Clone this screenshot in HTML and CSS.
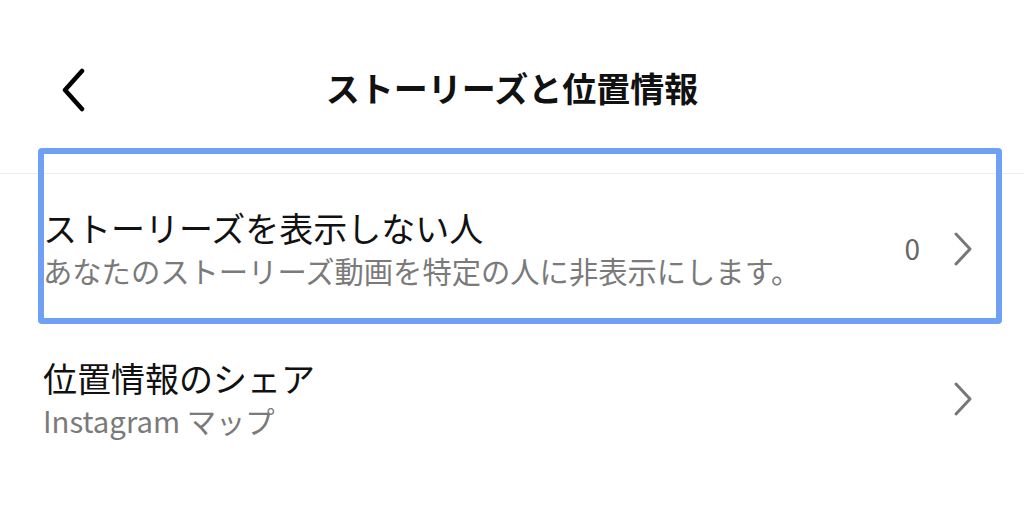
FILE: index.html
```html
<!DOCTYPE html>
<html lang="ja">
<head>
  <meta charset="UTF-8" />
  <meta name="viewport" content="width=device-width, initial-scale=1" />
  <title>ストーリーズと位置情報</title>
  <link rel="stylesheet" href="styles.css">
</head>
<body>

  <!-- Header -->
  <header class="top-bar">
    <button class="back-btn" aria-label="戻る">
      <svg width="30" height="44" viewBox="0 0 30 44" aria-hidden="true">
        <path d="M24 3 L7 22 L24 41" fill="none" stroke="#000" stroke-width="4.5" stroke-linecap="round" stroke-linejoin="round"/>
      </svg>
    </button>
    <h1 class="page-title">ストーリーズと位置情報</h1>
  </header>

  <!-- Settings list -->
  <main class="settings">
    <a href="#" class="setting-row">
      <div class="setting-text">
        <span class="setting-title">ストーリーズを表示しない人</span>
        <span class="setting-sub">あなたのストーリーズ動画を特定の人に非表示にします。</span>
      </div>
      <span class="setting-count">0</span>
      <svg class="chevron" width="22" height="36" viewBox="0 0 22 36" aria-hidden="true">
        <path d="M4 3 L18 18 L4 33" fill="none" stroke="#777" stroke-width="3" stroke-linecap="round" stroke-linejoin="round"/>
      </svg>
    </a>
    <a href="#" class="setting-row">
      <div class="setting-text">
        <span class="setting-title">位置情報のシェア</span>
        <span class="setting-sub">Instagram マップ</span>
      </div>
      <svg class="chevron" width="22" height="36" viewBox="0 0 22 36" aria-hidden="true">
        <path d="M4 3 L18 18 L4 33" fill="none" stroke="#777" stroke-width="3" stroke-linecap="round" stroke-linejoin="round"/>
      </svg>
    </a>
  </main>

  <!-- Highlight frame over the first row -->
  <div class="highlight" aria-hidden="true"></div>

</body>
</html>
```

FILE: styles.css
```css
/* Reset */
* {
  margin: 0;
  padding: 0;
  box-sizing: border-box;
}

:root {
  --color-text: #111;
  --color-sub: #7a7a7a;
  --color-divider: #ececec;
  --color-highlight: #6fa0f8;
}

html, body {
  height: 100%;
  background: #fff;
  font-family: "Noto Sans CJK JP", "Noto Sans", sans-serif;
  color: var(--color-text);
  overflow: hidden;
}

body {
  position: relative;
}

/* Header */
.top-bar {
  height: 174px;
  border-bottom: 1px solid var(--color-divider);
  display: flex;
  align-items: flex-start;
  justify-content: center;
  position: relative;
  padding-top: 62px;
}

.back-btn {
  position: absolute;
  left: 58px;
  top: 68px;
  background: transparent;
  border: 0;
  display: flex;
  cursor: pointer;
}

.page-title {
  font-size: 34px;
  font-weight: 700;
  line-height: 52px;
  letter-spacing: 0;
}

/* Settings rows */
.settings {
  display: flex;
  flex-direction: column;
}

.setting-row {
  height: 150px;
  display: flex;
  align-items: center;
  padding: 0 50px 0 43px;
  text-decoration: none;
  color: inherit;
}

.setting-text {
  flex: 1;
  display: flex;
  flex-direction: column;
  margin-top: -3px;
}

.setting-title {
  font-size: 34px;
  line-height: 44px;
  color: var(--color-text);
}

.setting-sub {
  font-size: 29.3px;
  line-height: 40px;
  color: var(--color-sub);
}

.setting-count {
  font-size: 28px;
  color: #666;
  margin-right: 32px;
  margin-top: -2px;
}

.chevron {
  flex-shrink: 0;
}

/* Annotation frame */
.highlight {
  position: absolute;
  left: 38px;
  top: 148px;
  width: 964px;
  height: 176px;
  border: 6px solid var(--color-highlight);
  border-radius: 4px;
  pointer-events: none;
}
```
